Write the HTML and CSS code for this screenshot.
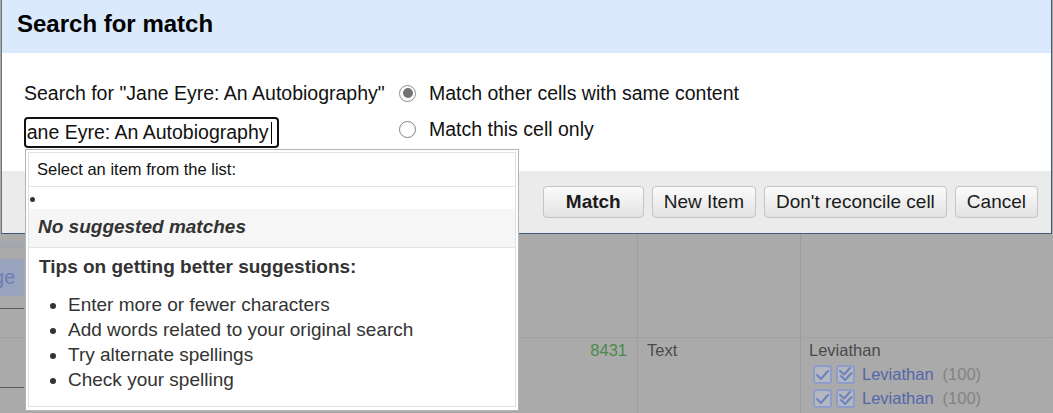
FILE: index.html
```html
<!DOCTYPE html>
<html>
<head>
<meta charset="utf-8">
<link rel="stylesheet" href="styles.css">
</head>
<body>
<div class="page">
  <div class="backdrop">
    <div class="cell head col-a">
      <div class="band"></div>
      <div class="ge-btn">ge</div>
      <div class="stub"></div>
    </div>
    <div class="cell head col-b"></div>
    <div class="cell head col-c"></div>
    <div class="cell data col-a">
      <div class="num">8431</div>
      <div class="stub stub-low"></div>
    </div>
    <div class="cell data col-b"><div class="txt">Text</div></div>
    <div class="cell data col-c">
      <div class="txt">Leviathan</div>
      <div class="cand">
        <svg class="cb" viewBox="0 0 19 19"><rect x="1" y="1" width="17" height="17" rx="2.5"/><path d="M4 10 L8 14 L15 6"/></svg>
        <svg class="cb" viewBox="0 0 19 19"><rect x="1" y="1" width="17" height="17" rx="2.5"/><path d="M4 6 L8 9.5 L14 3"/><path d="M5 11 L9 15 L15.5 8"/></svg>
        <span class="link">Leviathan</span><span class="score">(100)</span>
      </div>
      <div class="cand">
        <svg class="cb" viewBox="0 0 19 19"><rect x="1" y="1" width="17" height="17" rx="2.5"/><path d="M4 10 L8 14 L15 6"/></svg>
        <svg class="cb" viewBox="0 0 19 19"><rect x="1" y="1" width="17" height="17" rx="2.5"/><path d="M4 6 L8 9.5 L14 3"/><path d="M5 11 L9 15 L15.5 8"/></svg>
        <span class="link">Leviathan</span><span class="score">(100)</span>
      </div>
      <div class="cand">
        <svg class="cb" viewBox="0 0 19 19"><rect x="1" y="1" width="17" height="17" rx="2.5"/><path d="M4 10 L8 14 L15 6"/></svg>
        <svg class="cb" viewBox="0 0 19 19"><rect x="1" y="1" width="17" height="17" rx="2.5"/><path d="M4 6 L8 9.5 L14 3"/><path d="M5 11 L9 15 L15.5 8"/></svg>
      </div>
    </div>
  </div>

  <div class="dialog">
    <div class="dlg-head">Search for match</div>
    <div class="dlg-body">
      <div class="form-left">
        <div class="label">Search for "Jane Eyre: An Autobiography"</div>
        <div class="input"><span class="input-text">Jane Eyre: An Autobiography</span><span class="caret"></span></div>
      </div>
      <div class="radios">
        <div class="radio-row"><span class="radio checked"></span><span>Match other cells with same content</span></div>
        <div class="radio-row"><span class="radio"></span><span>Match this cell only</span></div>
      </div>
    </div>
    <div class="dlg-foot">
      <button class="btn primary">Match</button>
      <button class="btn">New Item</button>
      <button class="btn">Don't reconcile cell</button>
      <button class="btn">Cancel</button>
    </div>
  </div>

  <div class="popup">
    <div class="popup-inner">
      <div class="pop-head">Select an item from the list:</div>
      <div class="empty-item"><span class="dot"></span></div>
      <div class="nomatch">No suggested matches</div>
      <div class="tips">
        <div class="tips-title">Tips on getting better suggestions:</div>
        <ul class="tips-list">
          <li>Enter more or fewer characters</li>
          <li>Add words related to your original search</li>
          <li>Try alternate spellings</li>
          <li>Check your spelling</li>
        </ul>
      </div>
    </div>
  </div>
</div>
</body>
</html>
```

FILE: styles.css
```css
* { box-sizing: border-box; }
html, body { margin: 0; padding: 0; }
body {
  width: 1053px;
  height: 413px;
  overflow: hidden;
  background: #aaaaaa;
  font-family: "Liberation Sans", Arial, sans-serif;
}
.page { position: relative; width: 1053px; height: 413px; overflow: hidden; }

/* ---------- backdrop table (dimmed) ---------- */
.backdrop {
  display: grid;
  grid-template-columns: 637px 163px 1fr;
  grid-template-rows: 338px 1fr;
  height: 413px;
  background: #aaaaaa;
  color: #4a4a4a;
  font-size: 16.5px;
}
.head { border-bottom: 1px dotted #9a9a9a; }
.col-b, .col-c { border-left: 1px solid #9d9d9d; }
.head.col-a { display: flex; flex-direction: column; padding-top: 241px; }
.band { width: 24px; height: 7px; background: #a3a6ad; }
.ge-btn {
  margin-top: 11px;
  width: 24px;
  height: 37px;
  background: #9aa3bd;
  color: #6c7db3;
  font-size: 19.5px;
  line-height: 37px;
  white-space: nowrap;
  overflow: hidden;
  direction: rtl;
  padding-right: 9px;
}
.stub { width: 24px; margin-top: 12px; border-top: 1px solid #5a5a5a; }
.stub-low { margin-top: 25px; }
.data.col-a { display: flex; flex-direction: column; }
.num { line-height: 24px; text-align: right; padding-right: 10px; color: #4b8a4b; }
.data.col-b { padding-left: 9px; }
.data.col-c { padding-left: 8px; }
.txt { line-height: 24px; }
.cand { display: flex; align-items: center; height: 24px; margin-left: 4px; }
.cb { width: 19px; height: 19px; margin-right: 4px; flex: none; }
.cb rect { fill: #b4b7c0; stroke: #8d9dca; stroke-width: 2; }
.cb path { fill: none; stroke: #6c82be; stroke-width: 2; stroke-linecap: round; stroke-linejoin: round; }
.link { color: #5366a8; margin-left: 3px; }
.score { color: #838383; margin-left: 9px; }

/* ---------- dialog ---------- */
.dialog {
  position: absolute;
  left: 1px;
  top: 0;
  width: 1051px;
  height: 234px;
  background: #ffffff;
  border: 1px solid #3d5c7c;
  border-top: none;
  border-left-color: #6f747b;
  display: flex;
  flex-direction: column;
}
.dlg-head {
  height: 53px;
  flex: none;
  background: #dbe9fc;
  padding-left: 15px;
  font-size: 24px;
  font-weight: bold;
  line-height: 48px;
  color: #000;
}
.dlg-body {
  height: 118px;
  flex: none;
  display: flex;
  padding: 28px 0 0 22px;
  font-size: 19.5px;
  color: #111;
}
.form-left { width: 375px; flex: none; display: flex; flex-direction: column; gap: 12px; }
.label { line-height: 24px; white-space: nowrap; }
.input {
  width: 255px;
  height: 31px;
  border: 2px solid #111;
  border-radius: 4px;
  overflow: hidden;
  white-space: nowrap;
  display: flex;
  align-items: center;
  background: #fff;
}
.input-text { margin-left: -9px; line-height: 27px; flex: none; }
.caret { display: inline-block; width: 0; height: 22px; border-left: 1px solid #000; margin-left: 2px; flex: none; }
.radios { display: flex; flex-direction: column; gap: 12px; }
.radio-row { display: flex; align-items: center; gap: 13px; line-height: 24px; white-space: nowrap; }
.radio {
  width: 17px;
  height: 17px;
  border-radius: 50%;
  border: 1px solid #808080;
  background: #fff;
  flex: none;
  display: flex;
  align-items: center;
  justify-content: center;
}
.radio.checked { border: 1.5px solid #8c8c8c; }
.radio.checked::after {
  content: "";
  width: 10px;
  height: 10px;
  border-radius: 50%;
  background: #737373;
}
.dlg-foot {
  flex: 1;
  background: #ebebeb;
  display: flex;
  justify-content: flex-end;
  align-items: flex-start;
  gap: 8px;
  padding: 15px 13px 0 0;
}
.btn {
  margin: 0;
  height: 32px;
  padding: 0 11px;
  font-family: "Liberation Sans", Arial, sans-serif;
  font-size: 19px;
  color: #1a1a1a;
  border: 1px solid #c4c4c4;
  border-radius: 4px;
  background: linear-gradient(#fbfbfb, #e3e3e3);
  line-height: 30px;
}
.btn.primary { font-weight: bold; padding: 0 22px; }

/* ---------- suggestion popup ---------- */
.popup {
  position: absolute;
  left: 25px;
  top: 149px;
  width: 494px;
  height: 262px;
  background: #fff;
  border: 1px solid #b3b3b3;
  padding: 2px 2px 3px 2px;
}
.popup-inner {
  height: 100%;
  border: 1px solid #dbe2ea;
  display: flex;
  flex-direction: column;
}
.pop-head {
  height: 34px;
  line-height: 33px;
  padding-left: 8px;
  font-size: 16.5px;
  color: #111;
  border-bottom: 1px solid #dde4ea;
}
.empty-item { height: 22px; display: flex; align-items: center; padding-top: 2px; }
.dot { width: 5px; height: 5px; border-radius: 50%; background: #333; margin-left: 1px; }
.nomatch {
  height: 39px;
  background: #f6f6f6;
  border-bottom: 1px solid #dde4ea;
  padding: 0 0 3px 9px;
  line-height: 35px;
  font-size: 19px;
  font-weight: bold;
  font-style: italic;
  color: #333;
}
.tips { padding: 7px 0 0 10px; color: #333; font-size: 19px; }
.tips-title { font-weight: bold; line-height: 24px; }
.tips-list { margin: 13px 0 0 0; padding-left: 29px; }
.tips-list li { line-height: 25px; }
```
